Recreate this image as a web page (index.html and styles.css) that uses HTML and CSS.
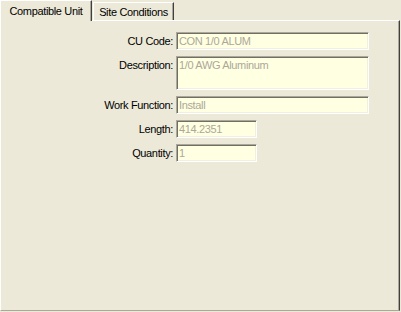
FILE: index.html
```html
<!DOCTYPE html>
<html>
<head>
<meta charset="utf-8">
<link rel="stylesheet" href="styles.css">
</head>
<body>
<div class="tabs">
  <div class="tab active">Compatible Unit</div>
  <div class="tab second">Site Conditions</div>
</div>
<div class="panel">
  <div class="form">
    <div class="label">CU Code:</div>
    <div class="field wide">CON 1/0 ALUM</div>
    <div class="label">Description:</div>
    <div class="field wide tall">1/0 AWG Aluminum</div>
    <div class="label">Work Function:</div>
    <div class="field wide">Install</div>
    <div class="label">Length:</div>
    <div class="field narrow">414.2351</div>
    <div class="label">Quantity:</div>
    <div class="field narrow">1</div>
  </div>
</div>
</body>
</html>
```
FILE: styles.css
```css
html, body {
  margin: 0;
  padding: 0;
  background: #ece9d8;
  font-family: "Liberation Sans", Arial, sans-serif;
  font-size: 11px;
  letter-spacing: -0.35px;
  color: #000;
}
.tabs {
  display: flex;
  align-items: flex-end;
  height: 20px;
}
.tab {
  box-sizing: border-box;
  height: 18px;
  border-top: 1px solid #fff;
  border-left: 1px solid #fff;
  border-right: 1px solid #404040;
  box-shadow: inset -1px 0 #aca899;
  padding-top: 3px;
  line-height: 13px;
  text-align: center;
  white-space: nowrap;
}
.tab.second {
  width: 81px;
  margin-left: 1px;
}
.tab.active {
  width: 92px;
  height: 21px;
  margin-bottom: -1px;
  padding-top: 4px;
  background: #ece9d8;
  position: relative;
  z-index: 1;
}
.panel {
  box-sizing: border-box;
  height: 291px;
  width: 400px;
  border-top: 1px solid #fff;
  border-left: 1px solid #fff;
  border-right: 1px solid #404040;
  border-bottom: 1px solid #aca899;
  box-shadow: inset -1px 0 #aca899;
  padding-top: 11px;
}
.form {
  display: grid;
  grid-template-columns: 172px auto;
  column-gap: 3px;
  row-gap: 6px;
  align-items: start;
}
.label {
  text-align: right;
  padding-top: 3px;
  line-height: 13px;
}
.field {
  box-sizing: border-box;
  height: 18px;
  background: #ffffe1;
  color: #aca899;
  border: 1px solid;
  border-color: #aca899 #fff #fff #aca899;
  box-shadow: inset 1px 1px #716f64, inset -1px -1px #f1efe2;
  padding: 2px 2px 0 2px;
  line-height: 13px;
  white-space: nowrap;
  overflow: hidden;
}
.wide { width: 193px; }
.narrow { width: 81px; }
.tall { height: 34px; }
```
